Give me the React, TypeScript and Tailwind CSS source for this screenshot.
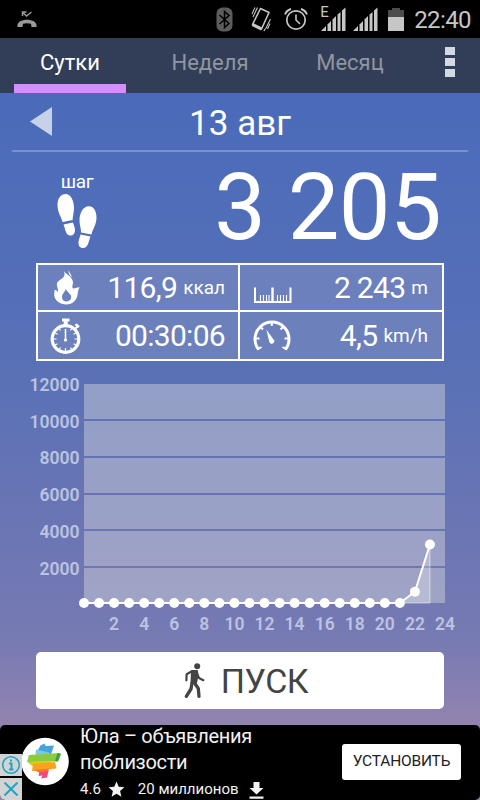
import { useState } from 'react';
import clsx from 'clsx';
import { MdStar } from 'react-icons/md';

const TABS = ['Сутки', 'Неделя', 'Месяц'];

// steps per hour, cumulative
const STEPS = [0, 0, 0, 0, 0, 0, 0, 0, 0, 0, 0, 0, 0, 0, 0, 0, 0, 0, 0, 0, 0, 0, 620, 3205];

const MAX_STEPS = 12000;

function SignalIcon() {
  return (
    <svg width="25" height="24" viewBox="0 0 25 24" fill="#c6c6c6">
      <path d="M0 24 L5 19 V24 Z" />
      <path d="M6.500 17.500 L10 14 V24 H6.500 Z" />
      <path d="M11.500 12.500 L15 9 V24 H11.500 Z" />
      <path d="M16.500 7.500 L19.500 5 V24 H16.500 Z" />
      <path d="M21 3.500 L24.500 0.500 V24 H21 Z" />
    </svg>
  );
}

function StatusBar() {
  return (
    <div className="h-[38px] bg-black flex items-center pl-[17px] pr-[9px]">
      <svg width="20" height="17" viewBox="0 0 20 17" fill="none" stroke="#9a9a9a">
        <path d="M5.500 5 V1 H9.500 M5.500 1 L9.500 5 L14.500 1" strokeWidth="1.500" />
        <path
          d="M0.500 16 C-0.500 11.500 4 8.700 10 8.700 C16 8.700 20.500 11.500 19.500 16 L14.500 16 L14 12.800 C11.500 12 8.500 12 6 12.800 L5.500 16 Z"
          fill="#9a9a9a"
          stroke="none"
        />
      </svg>
      <svg className="ml-auto" width="17" height="25" viewBox="0 0 17 25">
        <rect x="0.5" y="0.5" width="16" height="24" rx="6" fill="#5c5c5c" />
        <path d="M3.5 8 L13 16.5 L8.5 20.5 V4.5 L13 8.5 L3.5 17" fill="none" stroke="#000" strokeWidth="1.5" />
      </svg>
      <svg className="ml-[17px]" width="22" height="26" viewBox="0 0 22 26" fill="none" stroke="#c6c6c6">
        <path d="M10.5 2.5 L19 6.5 L11.5 23 L2.5 18.5 Z" strokeWidth="1.6" strokeLinejoin="round" />
        <path d="M2.5 18.5 L11.5 23" strokeWidth="3.2" />
        <path d="M7.5 1.5 L3 11 M5 1.5 L2 8 M20.5 13 L15.5 23 M20 17.5 L17.5 23 M14 25 L15 23" strokeWidth="1.1" />
      </svg>
      <svg className="ml-[12px]" width="24" height="24" viewBox="0 0 24 24" fill="none" stroke="#c6c6c6">
        <circle cx="12" cy="13" r="9.2" strokeWidth="1.7" />
        <path d="M12 7.5 V13 L16 17" strokeWidth="1.6" />
        <path d="M1 7.5 Q2.5 3.5 7 2 M23 7.5 Q21.5 3.5 17 2" strokeWidth="1.9" />
      </svg>
      <div className="relative ml-[13px] -mt-px">
        <span className="absolute -left-px -top-[2px] text-[15px] leading-none text-[#c6c6c6]">E</span>
        <SignalIcon />
      </div>
      <div className="ml-[7px] -mt-px">
        <SignalIcon />
      </div>
      <svg className="ml-[10px] -mt-px" width="16" height="24" viewBox="0 0 16 24">
        <path d="M0 3 H4 V1 H12 V3 H16 V10 H0 Z" fill="#4c4c4c" />
        <rect y="10" width="16" height="14" fill="#c6c6c6" />
      </svg>
      <span className="ml-[10px] pt-px text-[24px] leading-none tracking-[-0.6px] text-[#c6c6c6]">22:40</span>
    </div>
  );
}

function StepsIcon() {
  return (
    <svg width="40" height="55" viewBox="0 0 40 55" fill="#fff">
      <path d="M8.5 0 C14 0 17 7 17 14 C17 19 15.500 22 15.700 26 L5.500 28 C4.500 23 0.500 19 0.500 11 C0.500 4 4 0 8.500 0 Z" />
      <path d="M6.500 30.500 L16 28.500 C16.500 31 18 33 18 36 C18 39.500 16.500 41.500 13.500 41.500 C8.500 41.500 8.500 35 6.500 30.500 Z" />
      <path d="M32 12.300 C36.500 12.300 39.500 17 39.500 23.500 C39.500 31 35.500 35 34.500 40.500 L24 38.500 C24.300 35 22.500 31.500 22.500 26.500 C22.500 19 26 12.300 32 12.300 Z" />
      <path d="M23.500 40.500 L33.500 42.500 C31.500 47 31.500 54 26 54 C22.500 54 21.500 51.500 21.500 48.500 C21.500 45.500 23 43.500 23.500 40.500 Z" />
    </svg>
  );
}

function FlameIcon() {
  return (
    <svg width="26" height="35" viewBox="0 0 26 35" fill="#fff">
      <path
        fillRule="evenodd"
        d="M9.500 0.500 C11 4 18.500 6.500 19 12 C19.200 14.500 17.800 16 18.500 17.800 C19.500 19.300 22 17.500 25.800 17.300 C23.500 20 24.300 23.500 23 27 C21.500 31.500 17.500 34.500 12.500 34.500 C6 34.500 0.500 30.500 0.200 25 C0 22.800 1 21 0.500 19.800 C2 20 3.200 20.800 3.800 22 C4.800 20 2.600 16.500 2.900 14 C3.300 10.500 8 9.500 10 6.500 C11 4.500 10.500 2.500 9.500 0.500 Z M11.500 18.800 C12 21.500 8 23.500 8 27 C8 30 10 31.500 12.500 31.500 C15.500 31.500 17.300 29.500 17.200 26.800 C17 24 14.300 23.300 11.500 18.800 Z"
      />
      <path d="M15 0 C14.500 2.500 18 4.500 17.500 7.500 C16.500 5.500 13.500 3.500 15 0 Z" />
    </svg>
  );
}

function StopwatchIcon() {
  return (
    <svg className="mt-px" width="32" height="36" viewBox="0 0 32 36" fill="none" stroke="#fff">
      <circle cx="15.500" cy="21" r="13.300" strokeWidth="3.200" />
      <path d="M12 2 H19.500" strokeWidth="3" />
      <path d="M15.700 2 V8" strokeWidth="4" />
      <path d="M24.500 11.500 L28 8" strokeWidth="1.800" />
      <path d="M25.500 6.200 L29 9" strokeWidth="2.500" />
      <path d="M15.500 11 V21" strokeWidth="1.600" />
      <circle cx="15.500" cy="22" r="1.600" fill="#fff" stroke="none" />
      <path
        d="M3 21 H6.500 M24.500 21 H28 M15.500 30 V33 M9.200 10.200 L10.500 12.500 M21.800 10.200 L20.500 12.500 M4.700 14.700 L7.500 16.300 M26.300 14.700 L23.500 16.300 M4.700 27.300 L7.500 25.700 M26.300 27.300 L23.500 25.700 M9.200 31.800 L10.500 29.500 M21.800 31.800 L20.500 29.500"
        strokeWidth="1.200"
      />
    </svg>
  );
}

function RulerIcon() {
  return (
    <svg className="mt-[16px]" width="38" height="17" viewBox="0 0 38 17" fill="none" stroke="#fff">
      <path d="M1 0.500 V15 H36.500 V0.500" strokeWidth="2" />
      <path d="M18.500 0.500 V15" strokeWidth="2.400" />
      <path d="M6.500 8 V14 M9.500 8 V14 M12.500 8 V14 M15 8 V14 M23.500 8 V14 M26.500 8 V14 M29.500 8 V14 M32.500 8 V14" strokeWidth="1.100" />
    </svg>
  );
}

function GaugeIcon() {
  return (
    <svg width="38" height="33" viewBox="0 0 38 33" fill="none" stroke="#fff">
      <path d="M5.600 30.500 A17 17 0 1 1 32.400 30.500" strokeWidth="3" />
      <path d="M18.800 3 V7 M7.500 8 L10 10.500 M30 8 L27.500 10.500 M2.500 19.500 H6.500 M35.500 19.500 H31.500 M4.500 30.500 L8.500 28 M33.500 30.500 L29.500 28" strokeWidth="2" />
      <path d="M13.300 10.500 L21.300 21.500 C22 24.500 18 26 16.500 23.500 Z" fill="#fff" stroke="none" />
    </svg>
  );
}

function WalkIcon() {
  return (
    <svg width="21" height="36" viewBox="0 0 21 36" fill="none" stroke="#444" strokeLinecap="round" strokeLinejoin="round">
      <circle cx="13.200" cy="3.200" r="3" fill="#444" stroke="none" />
      <path d="M8 8 L13 8 L13.500 12 L12 20 L7.500 20 Z" fill="#444" strokeWidth="2" />
      <path d="M7.500 8.500 L2.600 11.300 L2.400 17.300" strokeWidth="2.200" />
      <path d="M13 10.500 L15 15 L19.300 17.200" strokeWidth="2.200" />
      <path d="M8 20 L7 26 L2.300 33.300" strokeWidth="3.300" />
      <path d="M10.500 20 L14.300 25.500 L15 33.300" strokeWidth="3.300" />
    </svg>
  );
}

interface StatCellProps {
  icon: React.ReactNode;
  value: string;
  unit?: string;
  className?: string;
}

function StatCell({ icon, value, unit, className }: StatCellProps) {
  return (
    <div className={clsx('flex items-center justify-between', className)}>
      {icon}
      <div className="flex items-center gap-[6px]">
        <span className="text-[30px] leading-none tracking-[-0.7px]">{value}</span>
        {unit && <span className="text-[19px] leading-none">{unit}</span>}
      </div>
    </div>
  );
}

function StepsChart() {
  const left = 58;
  const top = 10;
  const width = 361;
  const height = 219;
  const bottom = top + height;
  const px = (hour: number) => left + (hour * width) / 24;
  const py = (steps: number) => bottom - (steps / MAX_STEPS) * height;
  const line = STEPS.map((s, i) => `${px(i)},${py(s)}`).join(' ');
  const ticks = [12000, 10000, 8000, 6000, 4000, 2000];
  const bands = [
    [10, 35],
    [47, 35],
    [84, 35],
    [121, 34],
    [157, 35],
    [194, 35],
  ];

  return (
    <svg className="block" width="440" height="270" viewBox="0 0 440 270">
      {bands.map(([y, h]) => (
        <rect key={y} x={left} y={y} width={width} height={h} fill="#d7d7dc" fillOpacity="0.45" />
      ))}
      {ticks.map((t, i) => (
        <text key={t} x={53.500} y={17 + i * 36.700} textAnchor="end" fontSize="17.5" fontWeight="600" fill="#bcc3e0">
          {t}
        </text>
      ))}
      {Array.from({ length: 12 }, (_, i) => (i + 1) * 2).map((h) => (
        <text key={h} x={px(h)} y={256} textAnchor="middle" fontSize="17.5" fontWeight="600" fill="#bcc3e0">
          {h}
        </text>
      ))}
      <polygon
        points={`${px(21)},${bottom} ${px(22)},${py(STEPS[22])} ${px(23)},${py(STEPS[23])} ${px(23)},${bottom}`}
        fill="#fff"
        fillOpacity="0.25"
        stroke="#fff"
        strokeOpacity="0.5"
      />
      <polyline points={line} fill="none" stroke="#fff" strokeWidth="2" />
      {STEPS.map((s, i) => (
        <circle key={i} cx={px(i)} cy={py(s)} r="5" fill="#fff" />
      ))}
    </svg>
  );
}

function AdBanner() {
  return (
    <div className="h-[75px] bg-black rounded-[5px] flex overflow-hidden">
      <div className="relative w-[80px] shrink-0">
        <svg className="absolute left-[21px] top-[12px]" width="48" height="49" viewBox="0 0 48 49">
          <circle cx="24" cy="24.500" r="23.800" fill="#fff" />
          <path d="M19.500 8.500 L23.500 6.500 L24.500 9 L33 8.500 L30 17.500 L14.500 17.500 L17.500 12 Z" fill="#45a4dc" />
          <path d="M15 12.500 L28 15.500 L30 17.500 L14.500 17.500 Z" fill="#7cc6ee" />
          <path d="M8 18 L39.500 16 L36.500 24.500 L6 25 Z" fill="#8ccb3c" />
          <path d="M36.500 16 L40 17 L37 24.500 L34 24 Z" fill="#3f9f3d" />
          <path d="M6.500 25 L30 24.500 L28 29 L11 29 Z" fill="#dcc61c" />
          <path d="M12 27 L34 25 L35.500 31.500 L11 34 Z" fill="#fba21b" />
          <path d="M13 33 L28 31.500 L27 36 L19 36 Z" fill="#f5762c" />
          <path d="M18.500 35 L27.500 34 L26 40.500 L20 41.500 L21.500 38.500 L17.500 39 Z" fill="#ee4c78" />
        </svg>
        <div className="absolute left-0 bottom-0 flex flex-col gap-[2px]">
          <div className="w-[22px] h-[22px] bg-[#d3d3d3] flex items-center justify-center">
            <svg width="20" height="20" viewBox="0 0 20 20" fill="none" stroke="#1ba6c4">
              <circle cx="10" cy="10" r="8.300" strokeWidth="1.600" />
              <path d="M8 8.500 H10.500 V14 M8 14.500 H12.500 M9 5.500 H11" strokeWidth="2" />
            </svg>
          </div>
          <div className="w-[22px] h-[22px] bg-[#d3d3d3] flex items-center justify-center">
            <svg width="14" height="14" viewBox="0 0 14 14" stroke="#1ba6c4" strokeWidth="2">
              <path d="M0.500 0.500 L13.500 13.500 M13.500 0.500 L0.500 13.500" />
            </svg>
          </div>
        </div>
      </div>
      <div className="flex-1 text-[#f2f2f2] whitespace-nowrap">
        <p className="text-[20px] leading-[26px] tracking-[-0.3px] -mt-[2px]">
          Юла – объявления
          <br />
          поблизости
        </p>
        <div className="flex items-center text-[15px] leading-[20px] mt-[4px]">
          <span>4.6</span>
          <MdStar className="size-[19px] ml-[6px]" />
          <span className="ml-[12px]">20 миллионов</span>
          <svg className="ml-[10px] mt-[2px]" width="15" height="17" viewBox="0 0 15 17" fill="currentColor">
            <path d="M4.500 0 H10.500 V6 H14.500 L7.500 12.500 L0.500 6 H4.500 Z M0.500 14.500 H14.500 V16.700 H0.500 Z" />
          </svg>
        </div>
      </div>
      <button className="w-[119px] h-[36px] mt-[19px] mr-[19px] rounded-[3px] bg-white text-[#222] text-[15.5px] leading-none tracking-[-0.2px]">
        УСТАНОВИТЬ
      </button>
    </div>
  );
}

export default function App() {
  const [activeTab, setActiveTab] = useState(0);

  return (
    <div className="w-[480px] h-[800px] overflow-hidden font-['Roboto',sans-serif] text-white flex flex-col bg-[linear-gradient(180deg,#4a6bba_0px,#4a6bba_100px,#526eb8_250px,#5a71b6_380px,#6a75b4_520px,#777ab3_640px,#9183b0_720px,#9484b0_800px)]">
      <StatusBar />

      {/* Tabs */}
      <div className="h-[55px] bg-[#323d57] flex">
        {TABS.map((tab, i) => (
          <button
            key={tab}
            onClick={() => setActiveTab(i)}
            className={clsx(
              'w-[140px] h-full flex flex-col items-center text-[22px] leading-none pt-[14px]',
              i === activeTab ? 'text-white' : 'text-[#8f969f]'
            )}
          >
            {tab}
            {i === activeTab && <span className="mt-auto w-[112px] h-[9px] bg-[#d48fff]" />}
          </button>
        ))}
        <div className="flex flex-col gap-[3px] pt-[9px] ml-[25px]">
          <span className="w-[10px] h-[8px] bg-[#d3d8e3]" />
          <span className="w-[10px] h-[8px] bg-[#d3d8e3]" />
          <span className="w-[10px] h-[8px] bg-[#d3d8e3]" />
        </div>
      </div>

      {/* Date */}
      <div className="mx-3 h-[59px] border-b-2 border-white/25 grid grid-cols-[1fr_auto_1fr] items-center">
        <svg className="ml-[18px]" width="22" height="29" viewBox="0 0 22 29">
          <path d="M0 14.500 L22 0 V29 Z" fill="#c8d1ea" />
        </svg>
        <span className="text-[35px] leading-none pt-[4px]">13 авг</span>
      </div>

      {/* Steps */}
      <div className="h-[111px] flex justify-between pl-[57px] pr-[39px]">
        <div className="flex flex-col items-center pt-[20px]">
          <span className="text-[19px] leading-none tracking-[-0.4px]">шаг</span>
          <div className="mt-[3px]">
            <StepsIcon />
          </div>
        </div>
        <span className="text-[92px] leading-none pt-[10px] tracking-[-0.6px]">3 205</span>
      </div>

      {/* Stats */}
      <div className="mx-[36px] h-[98px] border-2 border-white bg-white grid grid-cols-[200px_202px] grid-rows-[45px_47px] gap-[2px]">
        <StatCell className="bg-[#6b80bd] pl-[16px] pr-[13px]" icon={<FlameIcon />} value="116,9" unit="ккал" />
        <StatCell className="bg-[#6b80bd] pl-[14px] pr-[14px]" icon={<RulerIcon />} value="2 243" unit="m" />
        <StatCell className="bg-[#6c80bc] pl-[12px] pr-[13px]" icon={<StopwatchIcon />} value="00:30:06" />
        <StatCell className="bg-[#6c80bc] pl-[13px] pr-[14px]" icon={<GaugeIcon />} value="4,5" unit="km/h" />
      </div>

      <div className="pl-[26px] pt-[13px] h-[291px]">
        <StepsChart />
      </div>

      <button className="mx-[36px] h-[57px] shrink-0 rounded-[5px] bg-white text-[#444] flex items-center justify-center gap-[16px] pl-[12px]">
        <WalkIcon />
        <span className="text-[34px] leading-none tracking-[-0.4px]">ПУСК</span>
      </button>

      <div className="mt-auto">
        <AdBanner />
      </div>
    </div>
  );
}
